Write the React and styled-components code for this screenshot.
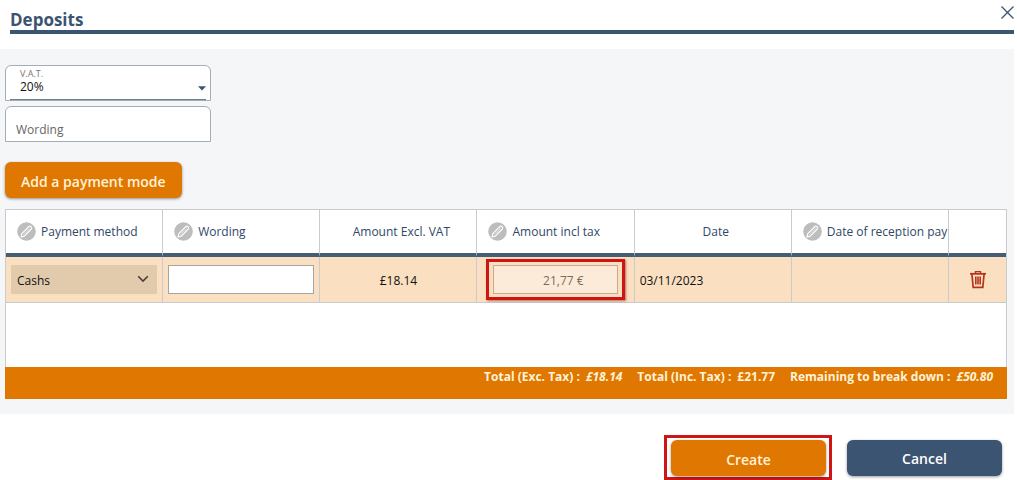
import React from "react";
import styled, { createGlobalStyle } from "styled-components";

const navy = "#3b5472";
const orange = "#df7700";
const line = "#c9cbce";

const GlobalStyle = createGlobalStyle`
  *, *::before, *::after { box-sizing: border-box; }
  body { margin: 0; background: #fff; }
  body, button, input, select {
    font-family: "Open Sans", "Noto Sans", sans-serif;
  }
`;

const Dialog = styled.main`
  display: flex;
  flex-direction: column;
  padding-right: 3px;
  font-size: 12px;
  line-height: 16px;
  color: #111;
`;

const Header = styled.header`
  display: flex;
  align-items: flex-start;
  justify-content: space-between;
  margin-left: 10px;
  height: 34px;
  border-bottom: 4px solid ${navy};
`;

const Title = styled.h1`
  margin: 0;
  padding-top: 9px;
  font-size: 17px;
  line-height: 22px;
  font-weight: 700;
  color: ${navy};
`;

const IconButton = styled.button`
  display: inline-flex;
  align-items: center;
  justify-content: center;
  padding: 0;
  border: 0;
  background: none;
  color: ${(p) => p.$color};
  vertical-align: middle;
  cursor: pointer;
`;

const CloseButton = styled(IconButton)`
  width: 14px;
  height: 24px;
`;

const Panel = styled.section`
  margin-top: 15px;
  padding: 16px 7px 15px 5px;
  background: #f5f6f8;
`;

const Fields = styled.div`
  display: flex;
  flex-direction: column;
  gap: 5px;
  width: 206px;
`;

const FieldBox = styled.div`
  position: relative;
  display: flex;
  flex-direction: column;
  height: 36px;
  padding: 0 4px;
  border: 1px solid #a3adb8;
  border-radius: 6px 6px 0 0;
  background: #fff;
`;

const FieldLabel = styled.label`
  padding: 3px 10px 0;
  font-size: 9px;
  line-height: 10px;
  color: #777;
`;

const FieldSelect = styled.select`
  flex: 1;
  width: 100%;
  padding: 0 10px 4px;
  border: 0;
  border-bottom: 1px solid #6b7f90;
  appearance: none;
  background: none;
  font-size: 12px;
  line-height: 16px;
  color: #111;
`;

const FieldInput = styled.input`
  flex: 1;
  width: 100%;
  padding: 10px 6px 0;
  border: 0;
  background: none;
  font-size: 12px;
  &::placeholder { color: #666; opacity: 1; }
`;

const Caret = styled.svg`
  position: absolute;
  right: 4px;
  top: 20px;
  pointer-events: none;
`;

const Button = styled.button`
  height: 36px;
  min-width: ${(p) => (p.$wide ? "155px" : "0")};
  padding: 2px 16px 0;
  border: 0;
  border-radius: 6px;
  background: ${(p) => (p.$secondary ? navy : orange)};
  box-shadow: 0 1px 3px rgba(0, 0, 0, 0.4);
  font-size: 14px;
  font-weight: 600;
  color: ${(p) => (p.$secondary ? "#fff" : "#fff3d8")};
  cursor: pointer;
`;

const Toolbar = styled.div`
  display: flex;
  margin: 20px 0 11px;
`;

const TableFrame = styled.div`
  min-height: 158px;
  border: 1px solid ${line};
  border-bottom: 0;
  background: #fff;
`;

const Table = styled.table`
  width: 100%;
  table-layout: fixed;
  border-collapse: separate;
  border-spacing: 0;
`;

const ActionCol = styled.col`
  width: 57px;
`;

const HeadCell = styled.th`
  height: 47px;
  padding: 0 0 0 ${(p) => (p.$editable ? "11px" : "6px")};
  border-bottom: 4px solid #445c74;
  border-right: 1px solid ${line};
  white-space: nowrap;
  text-align: ${(p) => (p.$editable ? "left" : "center")};
  font-weight: 500;
  color: #2f4866;
  &:last-child { border-right: 0; }
`;

const HeadContent = styled.span`
  display: inline-flex;
  align-items: center;
  gap: 5px;
  vertical-align: middle;
`;

const Cell = styled.td`
  height: 46px;
  padding: 0 ${(p) => p.$pad || "5px"};
  border-bottom: 1px solid ${line};
  border-right: 1px solid ${line};
  background: #fadfc0;
  text-align: ${(p) => p.$align || "left"};
  &:last-child { border-right: 0; }
`;

const SelectWrap = styled.div`
  position: relative;
`;

const CellSelect = styled.select`
  display: block;
  width: 100%;
  height: 29px;
  padding: 2px 6px 0;
  border: 0;
  border-radius: 0;
  appearance: none;
  background: #e2caad;
  font-size: 12px;
  color: #111;
`;

const Chevron = styled.svg`
  position: absolute;
  right: 8px;
  top: 10px;
  pointer-events: none;
`;

const CellInput = styled.input`
  display: block;
  width: 100%;
  height: 29px;
  padding: 2px 33px 0 6px;
  border: 1px solid ${(p) => (p.disabled ? "#c9ab8a" : "#a5a5a5")};
  background: ${(p) => (p.disabled ? "#fdebd9" : "#fff")};
  text-align: ${(p) => (p.disabled ? "right" : "left")};
  font-size: 12px;
  color: #776b5e;
`;

const CellText = styled.span`
  display: block;
  padding-top: 2px;
`;

const Highlight = styled.div`
  padding: ${(p) => p.$pad};
  border: 3px solid #cf1414;
  box-shadow: ${(p) => (p.$shadow ? "1px 1px 2px rgba(120, 0, 0, 0.5)" : "none")};
`;

const Totals = styled.div`
  display: flex;
  flex-wrap: wrap;
  justify-content: flex-end;
  gap: 0 15px;
  min-height: 32px;
  padding: 2px 14px 0;
  background: ${orange};
  font-size: 12px;
  font-weight: 700;
  color: #fff3d8;
`;

const Total = styled.span`
  display: inline-flex;
  gap: 6px;
`;

const Actions = styled.footer`
  display: flex;
  align-items: center;
  justify-content: flex-end;
  gap: 15px;
  padding: 21px 12px 0 0;
`;

const CloseIcon = () => (
  <svg width="13" height="13" viewBox="0 0 13 13" fill="none" stroke="currentColor" strokeWidth="1.3" aria-hidden="true">
    <path d="M0.5 0.5 12.5 12.5M12.5 0.5 0.5 12.5" />
  </svg>
);

const PencilIcon = () => (
  <svg width="19" height="19" viewBox="0 0 19 19" fill="none" aria-hidden="true">
    <circle cx="9.5" cy="9.5" r="9.3" fill="#bdbdbd" />
    <path d="M4 15 4.8 11.6 11.9 4.5Q13 3.6 14.1 4.7 15.3 5.9 14.3 7L7.3 14.1Z" stroke="#fff" strokeWidth="1.1" strokeLinejoin="round" />
    <path d="M6.4 12.5 12.6 6.3" stroke="#fff" strokeWidth="0.6" />
  </svg>
);

const TrashIcon = () => (
  <svg width="16" height="19" viewBox="0 0 16 19" fill="none" stroke="currentColor" aria-hidden="true">
    <path d="M0 3.8H16" strokeWidth="1.8" />
    <path d="M5.5 3.5V1.6H10.5V3.5" strokeWidth="1.4" />
    <path d="M1.9 4 3.2 17.4H12.8L14.1 4" strokeWidth="1.7" />
    <path d="M5.8 6.5V14.5M8 6.5V14.5M10.2 6.5V14.5" strokeWidth="1.6" />
  </svg>
);

const columns = [
  { label: "Payment method", editable: true },
  { label: "Wording", editable: true },
  { label: "Amount Excl. VAT" },
  { label: "Amount incl tax", editable: true },
  { label: "Date" },
  { label: "Date of reception pay", editable: true },
];

export default function App() {
  return (
    <>
      <GlobalStyle />
      <Dialog>
        <Header>
          <Title>Deposits</Title>
          <CloseButton type="button" $color={navy} aria-label="Close">
            <CloseIcon />
          </CloseButton>
        </Header>

        <Panel>
          <Fields>
            <FieldBox>
              <FieldLabel htmlFor="vat">V.A.T.</FieldLabel>
              <FieldSelect id="vat" defaultValue="20%">
                <option>20%</option>
              </FieldSelect>
              <Caret width="8" height="5" viewBox="0 0 8 5" aria-hidden="true">
                <path d="M0 0.3H8L4 4.6Z" fill={navy} />
              </Caret>
            </FieldBox>
            <FieldBox>
              <FieldInput type="text" placeholder="Wording" aria-label="Wording" />
            </FieldBox>
          </Fields>

          <Toolbar>
            <Button type="button">Add a payment mode</Button>
          </Toolbar>

          <TableFrame>
            <Table>
              <colgroup>
                {columns.map((c) => (
                  <col key={c.label} />
                ))}
                <ActionCol />
              </colgroup>
              <thead>
                <tr>
                  {columns.map((c) => (
                    <HeadCell key={c.label} scope="col" $editable={c.editable}>
                      <HeadContent>
                        {c.editable && <PencilIcon />}
                        {c.label}
                      </HeadContent>
                    </HeadCell>
                  ))}
                  <HeadCell scope="col" aria-label="Actions" />
                </tr>
              </thead>
              <tbody>
                <tr>
                  <Cell>
                    <SelectWrap>
                      <CellSelect aria-label="Payment method" defaultValue="Cashs">
                        <option>Cashs</option>
                      </CellSelect>
                      <Chevron width="12" height="8" viewBox="0 0 12 8" fill="none" aria-hidden="true">
                        <path d="M1.2 1.2 6 6 10.8 1.2" stroke="#4a4036" strokeWidth="1.6" />
                      </Chevron>
                    </SelectWrap>
                  </Cell>
                  <Cell>
                    <CellInput type="text" aria-label="Row wording" />
                  </Cell>
                  <Cell $align="center">
                    <CellText>£18.14</CellText>
                  </Cell>
                  <Cell $pad="9px">
                    <Highlight $pad="3px 4px" $shadow>
                      <CellInput type="text" aria-label="Amount incl tax" defaultValue="21,77 €" disabled />
                    </Highlight>
                  </Cell>
                  <Cell>
                    <CellText>03/11/2023</CellText>
                  </Cell>
                  <Cell />
                  <Cell $align="center">
                    <IconButton type="button" $color="#b5341c" aria-label="Delete row">
                      <TrashIcon />
                    </IconButton>
                  </Cell>
                </tr>
              </tbody>
            </Table>
          </TableFrame>

          <Totals>
            <Total>
              <span>Total (Exc. Tax) :</span>
              <em>£18.14</em>
            </Total>
            <Total>
              <span>Total (Inc. Tax) :</span>
              <span>£21.77</span>
            </Total>
            <Total>
              <span>Remaining to break down :</span>
              <em>£50.80</em>
            </Total>
          </Totals>
        </Panel>

        <Actions>
          <Highlight $pad="2px 3px 1px 4px">
            <Button type="button" $wide>Create</Button>
          </Highlight>
          <Button type="button" $wide $secondary>Cancel</Button>
        </Actions>
      </Dialog>
    </>
  );
}
